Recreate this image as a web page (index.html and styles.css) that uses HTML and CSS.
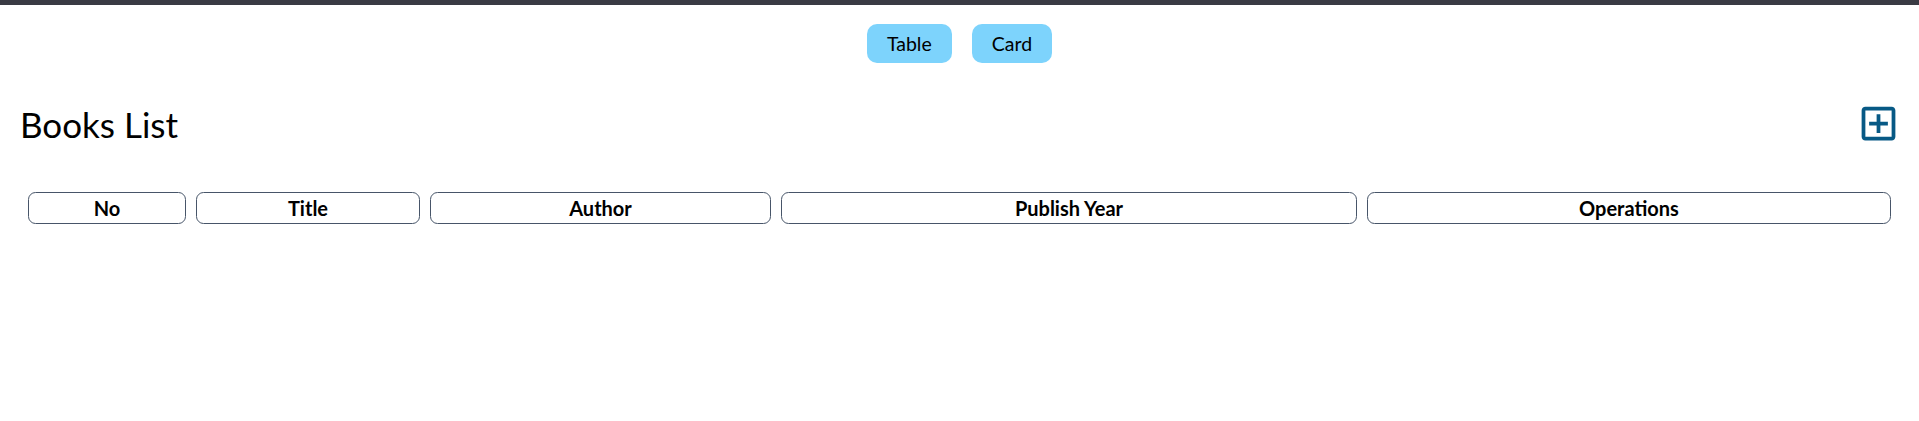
FILE: index.html
```html
<!DOCTYPE html>
<html lang="en">
<head>
<meta charset="utf-8">
<title>Books List</title>
<link rel="stylesheet" href="styles.css">
</head>
<body>
<div class="topbar"></div>
<main class="page">
  <div class="switch">
    <button class="switch-btn">Table</button>
    <button class="switch-btn">Card</button>
  </div>
  <div class="title-row">
    <h1 class="title">Books List</h1>
    <a class="add-link" href="#" aria-label="Add book">
      <svg class="add-icon" viewBox="0 0 24 24" width="45" height="45" fill="currentColor"><path d="M19 3H5c-1.11 0-2 .9-2 2v14c0 1.1.89 2 2 2h14c1.1 0 2-.9 2-2V5c0-1.1-.9-2-2-2zm0 16H5V5h14v14zm-8-2h2v-4h4v-2h-4V7h-2v4H7v2h4z"/></svg>
    </a>
  </div>
  <table class="books">
    <thead>
      <tr>
        <th class="c-no">No</th>
        <th class="c-title">Title</th>
        <th class="c-author">Author</th>
        <th class="c-year">Publish Year</th>
        <th class="c-ops">Operations</th>
      </tr>
    </thead>
    <tbody></tbody>
  </table>
</main>
</body>
</html>
```
FILE: styles.css
```css
* { box-sizing: border-box; }
html, body { margin: 0; background: #fff; }
body {
  font-family: "Lato", "Open Sans", "Noto Sans", sans-serif;
  color: #000;
}
.topbar {
  height: 5px;
  background: #3a3b44;
}
.page {
  padding: 19px 18px;
}
.switch {
  display: flex;
  justify-content: center;
  align-items: center;
  gap: 20px;
}
.switch-btn {
  font-family: inherit;
  font-size: 19.5px;
  line-height: 29px;
  padding: 5px 20px;
  background: #7dd3fc;
  border: none;
  border-radius: 10px;
  color: #000;
}
.title-row {
  display: flex;
  justify-content: space-between;
  align-items: center;
  margin: 40px 0 34px;
  height: 45px;
}
.title {
  margin: 0;
  font-size: 35px;
  line-height: 45px;
  font-weight: 400;
  padding-left: 2px;
  margin-top: -2px;
}
.add-link {
  display: flex;
  color: #075985;
  margin-bottom: 4px;
}
.add-icon { display: block; }
.books {
  width: 100%;
  table-layout: fixed;
  border-collapse: separate;
  border-spacing: 10px;
  margin: 0;
}
.books th {
  border: 1px solid #475569;
  border-radius: 7.5px;
  font-size: 20px;
  line-height: 30px;
  font-weight: 700;
  text-align: center;
  padding: 0;
}
.c-no { width: 158px; }
.c-title { width: 224px; }
.c-author { width: 341px; }
.c-year { width: 576px; }
.c-ops { width: 524px; }
```
